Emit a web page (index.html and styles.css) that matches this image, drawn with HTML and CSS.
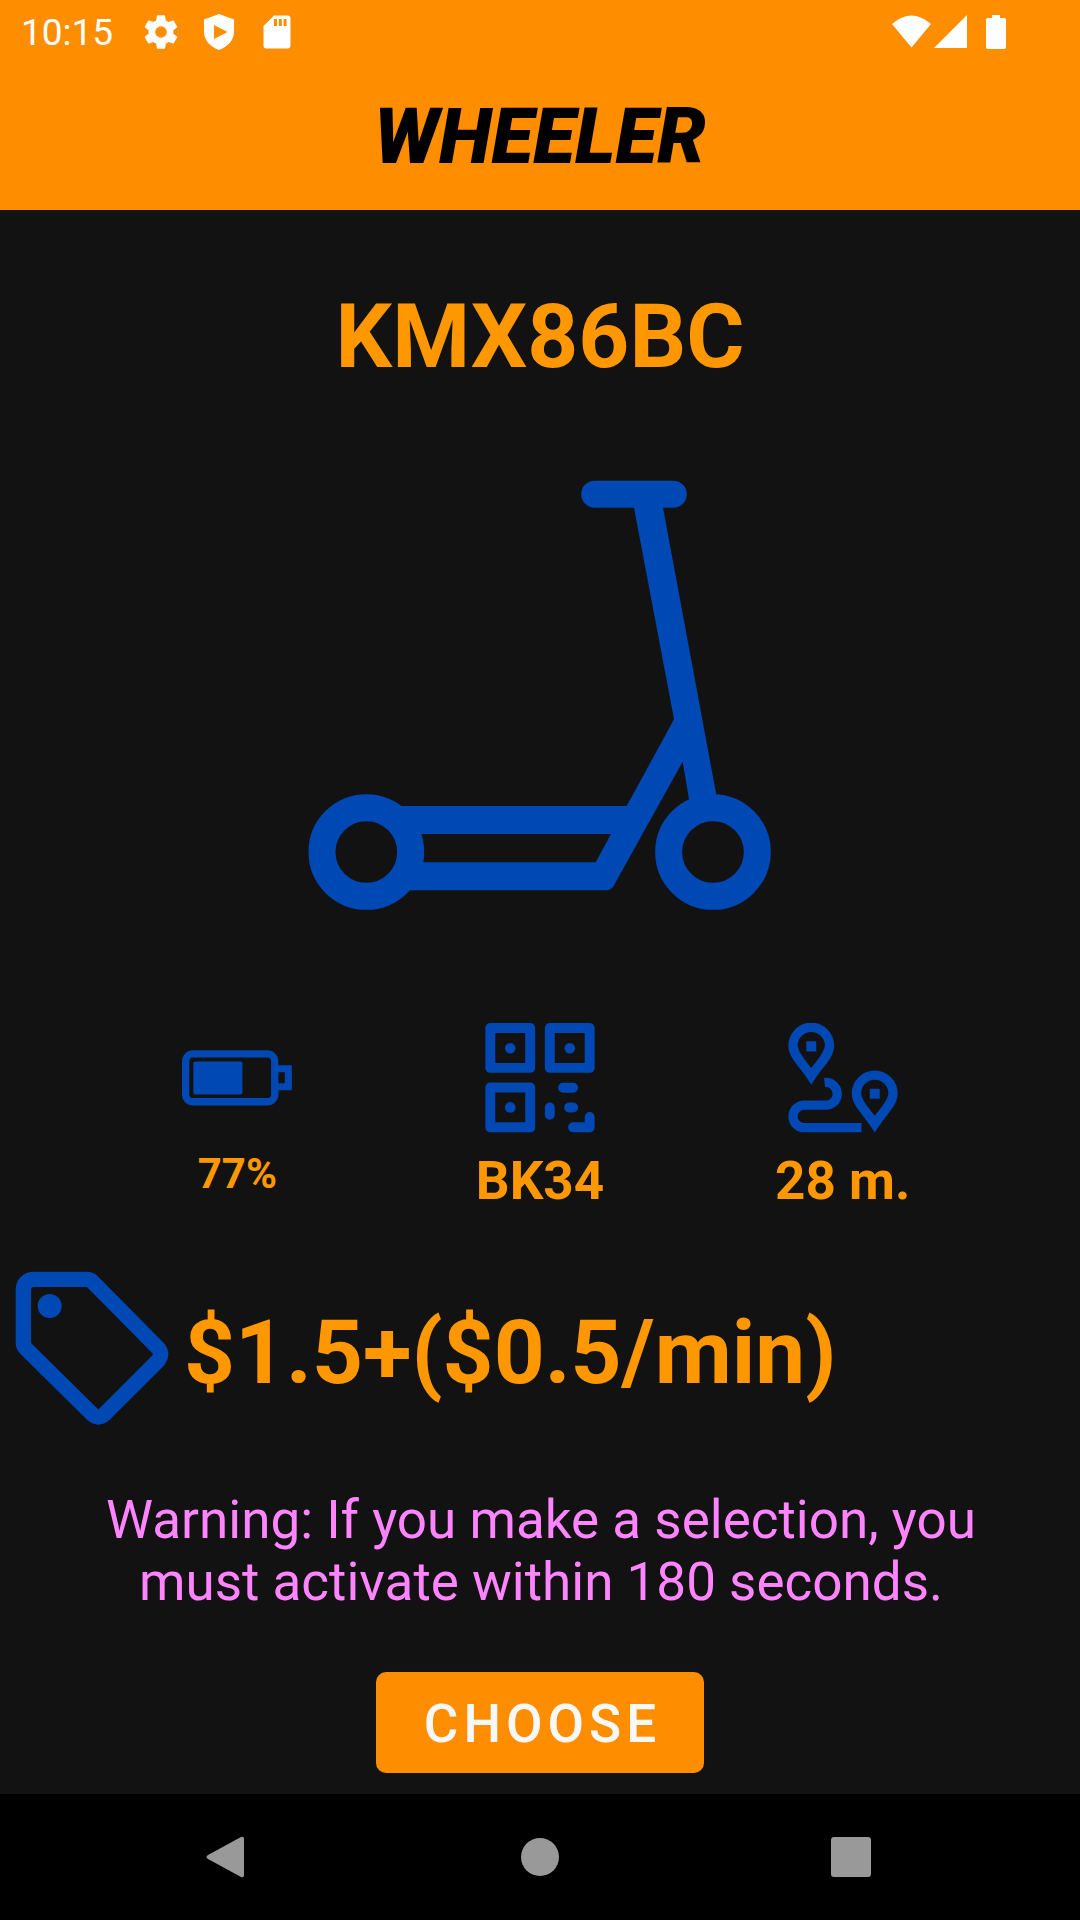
FILE: index.html
```html
<!DOCTYPE html>
<html lang="en">
<head>
<meta charset="utf-8">
<meta name="viewport" content="width=device-width, initial-scale=1">
<title>Wheeler</title>
<link rel="stylesheet" href="styles.css">
</head>
<body>
<div class="screen">
  <header class="top">
    <div class="status">
      <div class="status-left">
        <time class="clock">10:15</time>
        <svg class="status-icon" viewBox="0 0 24 24" aria-hidden="true"><path fill-rule="evenodd" d="M19.4 13a7.500 7.500 0 0 0 0-2l2.100-1.650a.5.5 0 0 0 .12-.64l-2-3.460a.5.5 0 0 0-.61-.22l-2.490 1a7.300 7.300 0 0 0-1.690-.98l-.38-2.650A.49.49 0 0 0 14 2h-4a.49.49 0 0 0-.49.42l-.38 2.650c-.61.25-1.170.59-1.690.98l-2.490-1a.5.5 0 0 0-.61.22l-2 3.460a.5.5 0 0 0 .12.64L4.570 11a7.900 7.900 0 0 0 0 2l-2.110 1.650a.5.5 0 0 0-.12.64l2 3.460c.12.22.39.3.61.22l2.490-1c.52.4 1.080.73 1.690.98l.38 2.650c.03.24.24.42.49.42h4c.25 0 .46-.18.49-.42l.38-2.650c.61-.25 1.170-.59 1.690-.98l2.490 1c.23.09.49 0 .61-.22l2-3.460a.5.5 0 0 0-.12-.64zM12 15.500a3.500 3.500 0 1 1 0-7 3.500 3.500 0 0 1 0 7z"/></svg>
        <svg class="status-icon" viewBox="0 0 40 40" aria-hidden="true"><path fill-rule="evenodd" d="M20 2 35 7.500V20c0 8-6.500 15-15 18C11.500 35 5 28 5 20V7.500zM15 13v14l13.500-7z"/></svg>
        <svg class="status-icon" viewBox="0 0 40 40" aria-hidden="true"><path fill-rule="evenodd" d="M17 3.500h13.500a3 3 0 0 1 3 3v27a3 3 0 0 1-3 3h-21a3 3 0 0 1-3-3V14zM17 7v7h3V7zM21.800 7v7h3V7zM26.600 7v7h3V7z"/></svg>
      </div>
      <svg class="signals" viewBox="890 10 120 42" aria-hidden="true"><path d="M892 23q19.500-17 39 0l-19.500 23.500zM967 14v33h-33zM992 14h8v3h4a2 2 0 0 1 2 2v27a2 2 0 0 1-2 2h-16a2 2 0 0 1-2-2V19a2 2 0 0 1 2-2h4z"/></svg>
    </div>
    <div class="brand">WHEELER</div>
  </header>

  <main class="content">
    <h1 class="code">KMX86BC</h1>
    <svg class="scooter" viewBox="0 0 1500 1410" role="img" aria-label="Scooter">
      <g fill="none" stroke="currentColor" stroke-width="81">
        <circle cx="229" cy="1176" r="133"/>
        <circle cx="1269" cy="1176" r="133"/>
      </g>
      <path fill="currentColor" fill-rule="evenodd" d="M914 62h236a40 40 0 0 1 0 81h-31L1279 1005 1198 1023 1178 905 972 1276Q964 1291 948 1291H350L398 1207H917L963 1122H392L330 1038H1010L1152 778 1032 143H914a40 40 0 0 1 0-81z"/>
    </svg>

    <section class="stats">
      <div class="stat">
        <svg class="stat-icon" viewBox="67 67 331 331" aria-hidden="true">
          <rect x="78" y="160" width="268" height="144" rx="22" fill="none" stroke="currentColor" stroke-width="22"/>
          <rect x="101" y="183" width="148" height="99" rx="6" fill="currentColor"/>
          <path d="M354 205h33v54h-33" fill="none" stroke="currentColor" stroke-width="21"/>
        </svg>
        <span class="stat-small">77%</span>
      </div>
      <div class="stat">
        <svg class="stat-icon" viewBox="76 67 331 331" aria-hidden="true">
          <g fill="none" stroke="currentColor" stroke-width="30" stroke-linejoin="round" stroke-linecap="round">
            <path d="M92 82h120v120H92zM271 82h120v120H271zM92 261h120v120H92zM311 262h30M271 321v22M329 321h12M341 381h50v-31"/>
          </g>
          <g fill="currentColor"><circle cx="152" cy="143" r="16"/><circle cx="331" cy="143" r="16"/><circle cx="152" cy="321" r="16"/></g>
        </svg>
        <span>BK34</span>
      </div>
      <div class="stat">
        <svg class="stat-icon" viewBox="82 67 331 331" aria-hidden="true">
          <g fill="none" stroke="currentColor" stroke-width="28">
            <path d="M152 227C128 190 97 165 97 135a55 55 0 0 1 110 0C207 165 176 190 152 227zM343 371C319 334 288 309 288 279a55 55 0 0 1 110 0C398 309 367 334 343 371z"/>
            <path d="M192 246a34 34 0 0 1 8 68H131a34 34 0 0 0 0 68H303"/>
          </g>
          <path fill="currentColor" d="M137 122h30v31h-30zM328 265h30v30h-30z"/>
        </svg>
        <span>28 m.</span>
      </div>
    </section>

    <section class="price">
      <svg class="tag" viewBox="0 30 552 552" aria-hidden="true">
        <path d="M70 117a30 30 0 0 1 28-29H262q8 0 15 7L476 296q12 17 0 34L312 494q-17 14-34 0L77 295q-7-7-7-15z" fill="none" stroke="currentColor" stroke-width="46"/>
        <circle cx="149" cy="168" r="36" fill="currentColor"/>
      </svg>
      <span>$1.5+($0.5/min)</span>
    </section>

    <p class="warning">Warning: If you make a selection, you must activate within 180 seconds.</p>
    <button class="choose" type="button">CHOOSE</button>
  </main>

  <nav class="system">
    <button class="key" type="button" aria-label="Back"><svg viewBox="0 0 48 48"><path d="M3 22 36 4q3-1 3 2v36q0 3-3 2L3 26q-3-2 0-4z"/></svg></button>
    <button class="key" type="button" aria-label="Home"><svg viewBox="0 0 48 48"><circle cx="24" cy="24" r="19"/></svg></button>
    <button class="key" type="button" aria-label="Recent apps"><svg viewBox="0 0 48 48"><rect x="4" y="4" width="40" height="40" rx="3"/></svg></button>
  </nav>
</div>
</body>
</html>
```
FILE: styles.css
```css
:root {
  --orange: #ff8d00;
  --amber: #ff9800;
  --blue: #0048b4;
}

* { box-sizing: border-box; }

body {
  margin: 0;
  background: #121212;
  color: var(--amber);
  font-family: Roboto, "Liberation Sans", sans-serif;
}

.screen {
  display: flex;
  flex-direction: column;
  min-height: 100vh;
}

.top { background: var(--orange); }

.status {
  display: flex;
  align-items: center;
  justify-content: space-between;
  height: 64px;
  padding: 0 70px 0 21px;
  color: #fff;
}

.status-left {
  display: flex;
  align-items: center;
  gap: 18px;
}

.clock {
  margin-right: 10px;
  padding-top: 2px;
  font-size: 37px;
  line-height: 48px;
}

.status-icon {
  width: 40px;
  height: 40px;
  fill: currentColor;
}

.signals {
  width: 120px;
  height: 42px;
  fill: currentColor;
}

.brand {
  height: 146px;
  color: #000;
  font-size: 77px;
  font-style: italic;
  font-weight: 900;
  line-height: 146px;
  text-align: center;
}

.content {
  display: flex;
  flex: 1;
  flex-direction: column;
  align-items: center;
  padding: 66px 0 20px;
}

.code {
  margin: 0;
  font-size: 89px;
  font-weight: 700;
  line-height: 122px;
}

.scooter {
  width: 500px;
  height: 470px;
  margin-top: 62px;
  color: var(--blue);
}

.stats {
  display: grid;
  grid-template-columns: repeat(3, 1fr);
  width: 100%;
  margin-top: 93px;
  padding: 0 86px;
}

.stat {
  display: flex;
  flex-direction: column;
  align-items: center;
  gap: 17px;
  font-size: 53px;
  font-weight: 700;
  line-height: 62px;
}

.stat-small {
  font-size: 42px;
  line-height: 48px;
}

.stat-icon {
  width: 110px;
  height: 110px;
  color: var(--blue);
}

.price {
  display: flex;
  align-items: center;
  align-self: stretch;
  margin-top: 48px;
  font-size: 89px;
  font-weight: 700;
  line-height: 122px;
}

.price span { padding-top: 2px; }

.tag {
  flex: none;
  width: 184px;
  height: 184px;
  color: var(--blue);
}

.warning {
  max-width: 920px;
  margin: 45px 0 0;
  padding-left: 2px;
  color: #ff84ff;
  font-size: 53px;
  line-height: 62px;
  text-align: center;
}

.choose {
  width: 328px;
  height: 101px;
  margin-top: 59px;
  padding: 3px 0 0 5px;
  border: 0;
  border-radius: 10px;
  background: var(--orange);
  color: #f8f8f8;
  font-family: inherit;
  font-size: 53px;
  font-weight: 500;
  letter-spacing: 5px;
}

.system {
  display: grid;
  grid-template-columns: repeat(3, 1fr);
  padding: 0 74px;
  background: #000;
}

.key {
  display: flex;
  align-items: center;
  justify-content: center;
  height: 126px;
  padding: 0;
  border: 0;
  background: none;
}

.key svg {
  width: 48px;
  height: 48px;
  fill: #999;
}
```
